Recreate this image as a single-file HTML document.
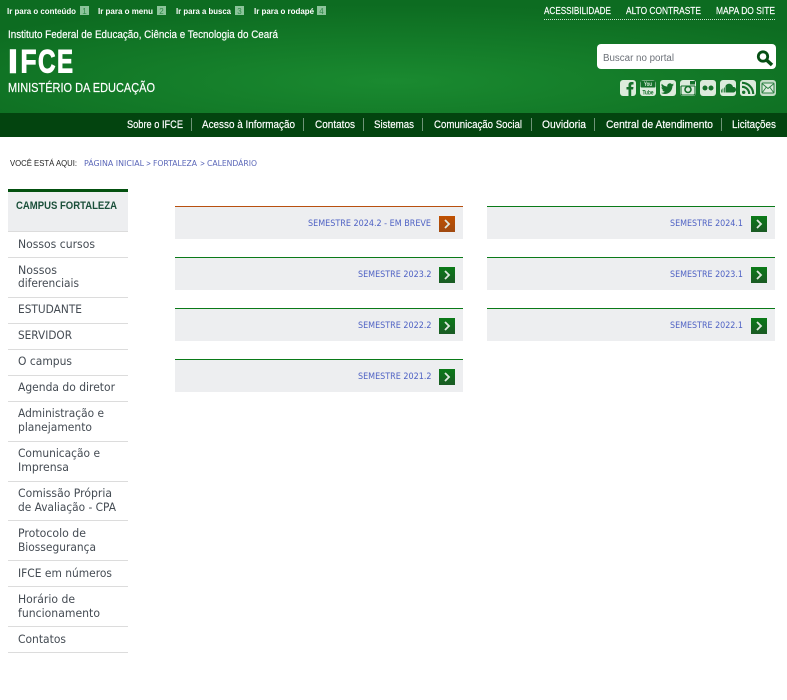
<!DOCTYPE html>
<html lang="pt-BR"><head><meta charset="utf-8"><title>IFCE</title>
<style>
html,body{margin:0;padding:0;background:#fff;width:787px;height:700px;overflow:hidden}
svg{position:absolute;left:0;top:0;display:block}
text{font-family:"Liberation Sans",sans-serif}
.n{fill:#444b53;font-size:11.5px}
.c{fill:#4f62c4;font-size:9.2px}
.b{fill:#5a66b8;font-size:8px}
.n text,.c text,text.b{font-family:"DejaVu Sans",sans-serif}
.w{stroke:#fff;stroke-width:.18px}
</style></head><body>
<svg width="787" height="700" viewBox="0 0 787 700">
<defs>
<radialGradient id="hd" cx="0.5" cy="0.72" r="0.68">
<stop offset="0" stop-color="#1a8a30"/><stop offset="1" stop-color="#0d6c21"/></radialGradient>
<linearGradient id="gr" x1="0" y1="0" x2="0" y2="1"><stop offset="0" stop-color="#0a7a18"/><stop offset="1" stop-color="#1a5a24"/></linearGradient>
<linearGradient id="or" x1="0" y1="0" x2="0" y2="1"><stop offset="0" stop-color="#c05000"/><stop offset="1" stop-color="#a04a10"/></linearGradient>
</defs>
<rect width="787" height="113" fill="url(#hd)"/>
<rect y="113" width="787" height="24" fill="#03440f"/>

<g font-size="8.500" font-weight="700" fill="#fff">
<text x="7" y="14" textLength="69" lengthAdjust="spacingAndGlyphs">Ir para o conteúdo</text>
<text x="98" y="14" textLength="55" lengthAdjust="spacingAndGlyphs">Ir para o menu</text>
<text x="176" y="14" textLength="55" lengthAdjust="spacingAndGlyphs">Ir para a busca</text>
<text x="254" y="14" textLength="60" lengthAdjust="spacingAndGlyphs">Ir para o rodapé</text>
</g>
<g fill="#8cc49a"><rect x="80" y="6" width="9" height="9"/><rect x="157" y="6" width="9" height="9"/><rect x="235" y="6" width="9" height="9"/><rect x="317" y="6" width="9" height="9"/></g>
<g font-size="8" fill="#2f8a48" text-anchor="middle"><text x="84.500" y="14">1</text><text x="161.500" y="14">2</text><text x="239.500" y="14">3</text><text x="321.500" y="14">4</text></g>

<text x="8" y="38" font-size="11" fill="#fff" class="w" textLength="270" lengthAdjust="spacingAndGlyphs">Instituto Federal de Educação, Ciência e Tecnologia do Ceará</text>
<g fill="#fff" stroke="#fff" font-size="32" font-weight="700">
<text x="8.500" y="72.500" stroke-width="1.600">I</text>
<text x="20.500" y="72.500" stroke-width="1" textLength="16" lengthAdjust="spacingAndGlyphs">F</text>
<text x="38" y="72.500" stroke-width="1" textLength="17.500" lengthAdjust="spacingAndGlyphs">C</text>
<text x="57" y="72.500" stroke-width="1" textLength="16" lengthAdjust="spacingAndGlyphs">E</text>
</g>
<text x="8" y="92" font-size="12.500" fill="#fff" class="w" textLength="147" lengthAdjust="spacingAndGlyphs">MINISTÉRIO DA EDUCAÇÃO</text>

<g font-size="10.500" fill="#fff" class="w">
<text x="544" y="14" textLength="67" lengthAdjust="spacingAndGlyphs">ACESSIBILIDADE</text>
<text x="626" y="14" textLength="75" lengthAdjust="spacingAndGlyphs">ALTO CONTRASTE</text>
<text x="716" y="14" textLength="59" lengthAdjust="spacingAndGlyphs">MAPA DO SITE</text>
</g>
<line x1="544" y1="19.500" x2="776" y2="19.500" stroke="#cfe5d2" stroke-dasharray="1 1"/>

<rect x="597" y="44" width="179" height="25" rx="4" fill="#fff"/>
<text x="603" y="61" font-size="10" fill="#6c7178" textLength="71" lengthAdjust="spacingAndGlyphs">Buscar no portal</text>
<circle cx="763" cy="56.500" r="4.700" fill="none" stroke="#064f14" stroke-width="2.800"/>
<path d="M766.500 60l5.500 5" stroke="#064f14" stroke-width="3.500"/>

<!-- social icons -->
<g fill="#dcebdc">
<rect x="620" y="80" width="16" height="16" rx="3"/>
<rect x="640" y="80" width="16" height="16" rx="3"/>
<rect x="660" y="80" width="16" height="16" rx="3"/>
<rect x="680" y="80" width="16" height="16" rx="3"/>
<rect x="700" y="80" width="16" height="16" rx="3"/>
<rect x="720" y="80" width="16" height="16" rx="3"/>
<rect x="740" y="80" width="16" height="16" rx="3"/>
<rect x="760" y="80" width="16" height="16" rx="3" fill="#c4dcc6"/>
</g>
<path d="M628.500 96v-6.500h-2v-2.500h2v-2c0-2 1.100-3 3-3h2v2.500h-1.300c-.8 0-1 .4-1 1v1.500h2.300l-.4 2.500h-1.900v6.500z" fill="#14702a"/>
<rect x="640.500" y="80.500" width="15" height="7" rx="1" fill="#14702a"/>
<text x="648" y="86" font-size="6" font-weight="700" text-anchor="middle" fill="#dcebdc" textLength="8" lengthAdjust="spacingAndGlyphs">You</text>
<text x="648" y="94.500" font-size="6.500" font-weight="700" text-anchor="middle" fill="#14702a" textLength="11" lengthAdjust="spacingAndGlyphs">Tube</text>
<path d="M674 84.500c-.5.200-1 .4-1.600.4.600-.3 1-.8 1.200-1.400-.5.300-1.100.5-1.700.7a2.700 2.700 0 0 0-4.600 2.400c-2.200-.1-4.200-1.200-5.500-2.800-.7 1.200-.4 2.800.8 3.600-.4 0-.9-.1-1.200-.3 0 1.300.9 2.400 2.100 2.700-.4.100-.8.100-1.200 0 .3 1.100 1.300 1.800 2.500 1.900-1.100.9-2.500 1.200-3.900 1.100 4.400 2.800 11.200.5 11.600-6.800.5-.3 1-.9 1.500-1.500z" fill="#14702a"/>
<path d="M681 86h14M681 86v7.500a1.500 1.500 0 0 0 1.500 1.500h11a1.500 1.500 0 0 0 1.500-1.500V86" fill="none" stroke="#14702a" stroke-width="1.100"/>
<circle cx="688" cy="89.500" r="3" fill="none" stroke="#14702a" stroke-width="1.600"/>
<rect x="690" y="81" width="5" height="3.500" fill="#14702a"/>
<circle cx="705" cy="88" r="2.500" fill="#14702a"/><circle cx="711" cy="88" r="2.500" fill="#14702a"/>
<path d="M721 92.500v-3h.8v3zM722.500 92.500v-4h.8v4zM724 92.500v-5h.8v5zM725.500 92.500v-6.500c.6-1.400 2-2.200 3.500-2.200 2.100 0 3.600 1.300 4 3.200 1.800-.3 3 .9 3 2.600 0 1.600-1.100 2.900-3 2.900z" fill="#14702a"/>
<circle cx="743.700" cy="92.300" r="1.700" fill="#14702a"/>
<path d="M742 86.800a7.200 7.200 0 0 1 7.200 7.200M742 82.800a11.200 11.200 0 0 1 11.200 11.200" fill="none" stroke="#14702a" stroke-width="2.100"/>
<rect x="762" y="83" width="12" height="10" rx="1" fill="#dcebdc" stroke="#2b8042" stroke-width="1"/>
<path d="M762 83.500l6 5 6-5M762 93l4-5.500M774 93l-4-5.500" fill="none" stroke="#2b8042" stroke-width=".9"/>

<!-- nav -->
<g font-size="11" fill="#fff" class="w">
<text x="127" y="128" textLength="56" lengthAdjust="spacingAndGlyphs">Sobre o IFCE</text>
<text x="202" y="128" textLength="93" lengthAdjust="spacingAndGlyphs">Acesso à Informação</text>
<text x="315" y="128" textLength="40" lengthAdjust="spacingAndGlyphs">Contatos</text>
<text x="374" y="128" textLength="40" lengthAdjust="spacingAndGlyphs">Sistemas</text>
<text x="434" y="128" textLength="88" lengthAdjust="spacingAndGlyphs">Comunicação Social</text>
<text x="542" y="128" textLength="44" lengthAdjust="spacingAndGlyphs">Ouvidoria</text>
<text x="606" y="128" textLength="107" lengthAdjust="spacingAndGlyphs">Central de Atendimento</text>
<text x="732" y="128" textLength="44" lengthAdjust="spacingAndGlyphs">Licitações</text>
</g>
<path d="M191.500 118v13M303.500 118v13M363.500 118v13M422.500 118v13M531.500 118v13M594.500 118v13M721.500 118v13" stroke="#6f9478" stroke-width="1"/>

<!-- breadcrumb -->
<text x="10" y="166" font-size="8.500" fill="#222" textLength="67" lengthAdjust="spacingAndGlyphs">VOCÊ ESTÁ AQUI:</text>
<text x="84" y="166" class="b" textLength="60" lengthAdjust="spacingAndGlyphs">PÁGINA INICIAL</text>
<text x="146" y="166" class="b" textLength="5" lengthAdjust="spacingAndGlyphs">&gt;</text>
<text x="153" y="166" class="b" textLength="44" lengthAdjust="spacingAndGlyphs">FORTALEZA</text>
<text x="200" y="166" class="b" textLength="5" lengthAdjust="spacingAndGlyphs">&gt;</text>
<text x="207" y="166" class="b" textLength="50" lengthAdjust="spacingAndGlyphs">CALENDÁRIO</text>

<!-- side menu -->
<rect x="8" y="189" width="120" height="43" fill="#edeef0"/>
<rect x="8" y="189" width="120" height="3" fill="#03500f"/>
<text x="16" y="209" font-size="11" font-weight="700" fill="#1a4f3a" textLength="101" lengthAdjust="spacingAndGlyphs">CAMPUS FORTALEZA</text>
<g fill="#dcdcdc">
<rect x="8" y="231" width="120" height="1"/><rect x="8" y="257" width="120" height="1"/><rect x="8" y="297" width="120" height="1"/><rect x="8" y="323" width="120" height="1"/><rect x="8" y="349" width="120" height="1"/><rect x="8" y="375" width="120" height="1"/><rect x="8" y="401" width="120" height="1"/><rect x="8" y="441" width="120" height="1"/><rect x="8" y="481" width="120" height="1"/><rect x="8" y="520" width="120" height="1"/><rect x="8" y="560" width="120" height="1"/><rect x="8" y="586" width="120" height="1"/><rect x="8" y="626" width="120" height="1"/><rect x="8" y="652" width="120" height="1"/>
</g>
<g class="n">
<text x="18" y="248" textLength="77" lengthAdjust="spacingAndGlyphs">Nossos cursos</text>
<text x="18" y="274" textLength="39" lengthAdjust="spacingAndGlyphs">Nossos</text>
<text x="18" y="287" textLength="61" lengthAdjust="spacingAndGlyphs">diferenciais</text>
<text x="18" y="313" textLength="64" lengthAdjust="spacingAndGlyphs">ESTUDANTE</text>
<text x="18" y="339" textLength="54" lengthAdjust="spacingAndGlyphs">SERVIDOR</text>
<text x="18" y="365" textLength="54" lengthAdjust="spacingAndGlyphs">O campus</text>
<text x="18" y="391" textLength="97" lengthAdjust="spacingAndGlyphs">Agenda do diretor</text>
<text x="18" y="417" textLength="86" lengthAdjust="spacingAndGlyphs">Administração e</text>
<text x="18" y="431" textLength="74" lengthAdjust="spacingAndGlyphs">planejamento</text>
<text x="18" y="457" textLength="82" lengthAdjust="spacingAndGlyphs">Comunicação e</text>
<text x="18" y="471" textLength="51" lengthAdjust="spacingAndGlyphs">Imprensa</text>
<text x="18" y="497" textLength="94" lengthAdjust="spacingAndGlyphs">Comissão Própria</text>
<text x="18" y="511" textLength="98" lengthAdjust="spacingAndGlyphs">de Avaliação - CPA</text>
<text x="18" y="537" textLength="68" lengthAdjust="spacingAndGlyphs">Protocolo de</text>
<text x="18" y="551" textLength="78" lengthAdjust="spacingAndGlyphs">Biossegurança</text>
<text x="18" y="577" textLength="94" lengthAdjust="spacingAndGlyphs">IFCE em números</text>
<text x="18" y="603" textLength="57" lengthAdjust="spacingAndGlyphs">Horário de</text>
<text x="18" y="617" textLength="82" lengthAdjust="spacingAndGlyphs">funcionamento</text>
<text x="18" y="643" textLength="48" lengthAdjust="spacingAndGlyphs">Contatos</text>
</g>

<!-- cards -->
<g fill="#edeef0">
<rect x="175" y="206" width="288" height="33"/><rect x="487" y="206" width="288" height="33"/>
<rect x="175" y="257" width="288" height="33"/><rect x="487" y="257" width="288" height="33"/>
<rect x="175" y="308" width="288" height="33"/><rect x="487" y="308" width="288" height="33"/>
<rect x="175" y="359" width="288" height="33"/>
</g>
<rect x="175" y="206" width="288" height="1" fill="#b8500f"/>
<g fill="#0a7a18">
<rect x="487" y="206" width="288" height="1"/>
<rect x="175" y="257" width="288" height="1"/><rect x="487" y="257" width="288" height="1"/>
<rect x="175" y="308" width="288" height="1"/><rect x="487" y="308" width="288" height="1"/>
<rect x="175" y="359" width="288" height="1"/>
</g>
<g class="c">
<text x="308" y="226" textLength="123" lengthAdjust="spacingAndGlyphs">SEMESTRE 2024.2 - EM BREVE</text>
<text x="358" y="277" textLength="73.500" lengthAdjust="spacingAndGlyphs">SEMESTRE 2023.2</text>
<text x="358" y="328" textLength="73.500" lengthAdjust="spacingAndGlyphs">SEMESTRE 2022.2</text>
<text x="358" y="379" textLength="73.500" lengthAdjust="spacingAndGlyphs">SEMESTRE 2021.2</text>
<text x="670" y="226" textLength="73" lengthAdjust="spacingAndGlyphs">SEMESTRE 2024.1</text>
<text x="670" y="277" textLength="73" lengthAdjust="spacingAndGlyphs">SEMESTRE 2023.1</text>
<text x="670" y="328" textLength="73" lengthAdjust="spacingAndGlyphs">SEMESTRE 2022.1</text>
</g>
<rect x="439" y="216" width="16" height="16" fill="url(#or)"/>
<g fill="url(#gr)">
<rect x="751" y="216" width="16" height="16"/>
<rect x="439" y="267" width="16" height="16"/><rect x="751" y="267" width="16" height="16"/>
<rect x="439" y="318" width="16" height="16"/><rect x="751" y="318" width="16" height="16"/>
<rect x="439" y="369" width="16" height="16"/>
</g>
<g fill="none" stroke="#dfe8df" stroke-width="1.800">
<path d="M445 220l4 4-4 4"/><path d="M757 220l4 4-4 4"/>
<path d="M445 271l4 4-4 4"/><path d="M757 271l4 4-4 4"/>
<path d="M445 322l4 4-4 4"/><path d="M757 322l4 4-4 4"/>
<path d="M445 373l4 4-4 4"/>
</g>
</svg>
</body></html>
